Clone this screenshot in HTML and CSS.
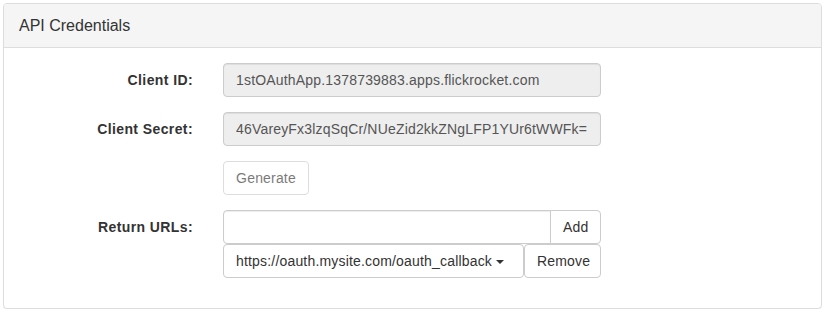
FILE: index.html
```html
<!DOCTYPE html>
<html>
<head>
<meta charset="utf-8">
<link rel="stylesheet" href="styles.css">
</head>
<body>
<div class="page">
  <div class="panel">
    <div class="panel-heading">API Credentials</div>
    <div class="panel-body">
      <div class="form-row">
        <label class="form-label">Client ID:</label>
        <div class="form-field"><input class="form-control" readonly value="1stOAuthApp.1378739883.apps.flickrocket.com"></div>
      </div>
      <div class="form-row">
        <label class="form-label">Client Secret:</label>
        <div class="form-field"><input class="form-control" readonly value="46VareyFx3lzqSqCr/NUeZid2kkZNgLFP1YUr6tWWFk="></div>
      </div>
      <div class="form-row">
        <span class="form-label"></span>
        <div class="form-field"><button class="btn btn-disabled" disabled>Generate</button></div>
      </div>
      <div class="form-row">
        <label class="form-label">Return URLs:</label>
        <div class="form-field">
          <div class="input-group">
            <input class="form-control group-input">
            <button class="btn group-btn">Add</button>
          </div>
          <div class="url-row">
            <button class="btn dropdown-btn">https://oauth.mysite.com/oauth_callback<span class="caret"></span></button>
            <button class="btn remove-btn">Remove</button>
          </div>
        </div>
      </div>
    </div>
  </div>
</div>
</body>
</html>
```
FILE: styles.css
```css
* { box-sizing: border-box; }
html, body { margin: 0; padding: 0; background: #fff; }
body {
  font-family: "Liberation Sans", Arial, sans-serif;
  font-size: 14px;
  line-height: 20px;
  color: #333;
}
.page { padding: 3px 0 0 3px; }
.panel {
  width: 819px;
  border: 1px solid #ddd;
  border-radius: 4px;
  box-shadow: 0 1px 1px rgba(0,0,0,.05);
  background: #fff;
}
.panel-heading {
  background: #f5f5f5;
  border-bottom: 1px solid #ddd;
  border-radius: 3px 3px 0 0;
  padding: 10px 15px;
  font-size: 16px;
  line-height: 23px;
  color: #333;
}
.panel-body { padding: 15px; }
.form-row {
  display: grid;
  grid-template-columns: 174px 378px;
  column-gap: 30px;
  margin-bottom: 15px;
}
.form-label {
  text-align: right;
  font-weight: bold;
  padding-top: 7px;
  letter-spacing: 0.4px;
}
.form-control {
  display: block;
  width: 100%;
  height: 34px;
  padding: 6px 12px;
  font-family: inherit;
  font-size: 14px;
  line-height: 20px;
  letter-spacing: 0.18px;
  color: #555;
  background: #fff;
  border: 1px solid #ccc;
  border-radius: 4px;
  box-shadow: inset 0 1px 1px rgba(0,0,0,.075);
  margin: 0;
}
.form-control[readonly] { background: #eee; }
.btn {
  display: inline-block;
  height: 34px;
  padding: 6px 12px;
  font-family: inherit;
  font-size: 14px;
  line-height: 20px;
  letter-spacing: 0.18px;
  color: #333;
  background: #fff;
  border: 1px solid #ccc;
  border-radius: 4px;
  margin: 0;
  white-space: nowrap;
}
.btn-disabled { opacity: .65; width: 86px; }
.input-group { display: flex; }
.group-input {
  flex: 1;
  border-top-right-radius: 0;
  border-bottom-right-radius: 0;
}
.group-btn {
  width: 51px;
  margin-left: -1px;
  border-top-left-radius: 0;
  border-bottom-left-radius: 0;
}
.url-row { display: flex; }
.dropdown-btn {
  flex: 1;
  text-align: left;
}
.remove-btn { width: 77px; }
.caret {
  display: inline-block;
  width: 0;
  height: 0;
  margin-left: 4px;
  vertical-align: middle;
  border-top: 4px solid #333;
  border-left: 4px solid transparent;
  border-right: 4px solid transparent;
}
```
